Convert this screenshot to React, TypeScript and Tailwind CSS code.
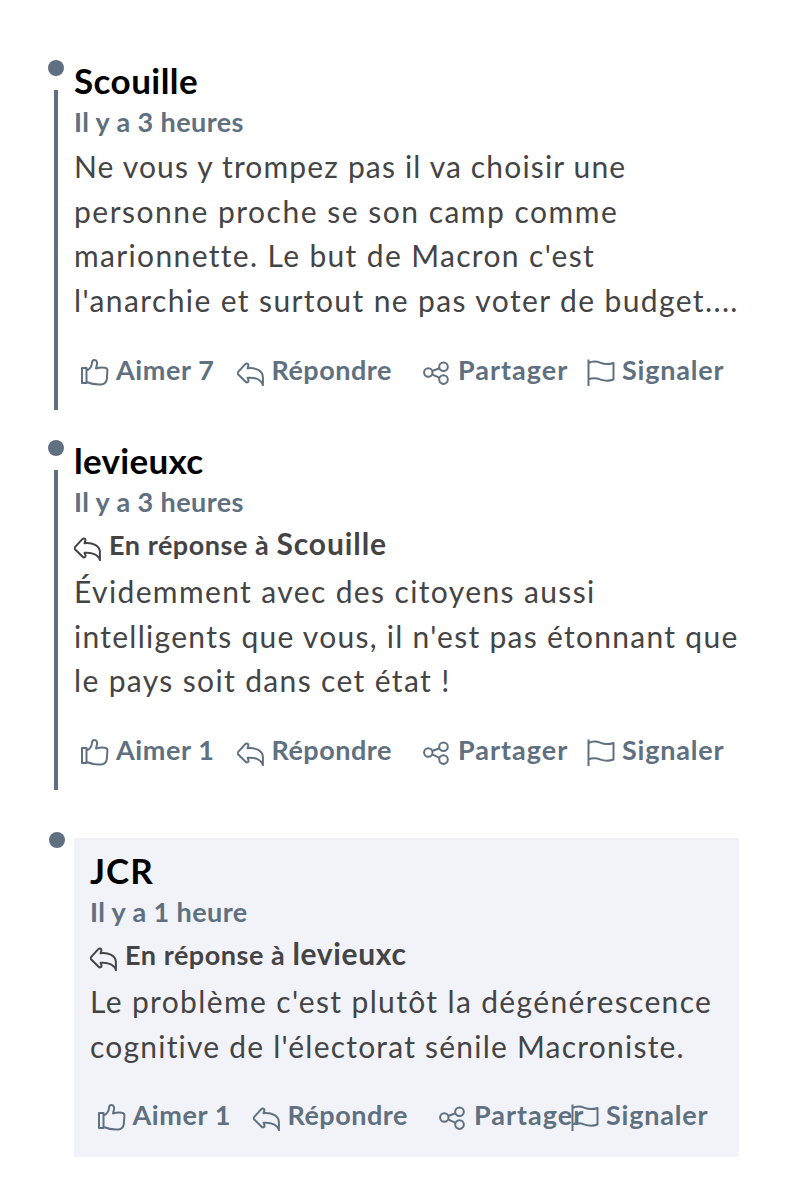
import type { ReactNode } from "react";
import clsx from "clsx";

type Line = {
  text: string;
  tracking: string;
};

type Comment = {
  author: string;
  authorTracking: string;
  time: string;
  replyTo?: string;
  replyTracking?: string;
  lines: Line[];
  likes: number;
  nested?: boolean;
};

const comments: Comment[] = [
  {
    author: "Scouille",
    authorTracking: "tracking-[0.45px]",
    time: "Il y a 3 heures",
    lines: [
      { text: "Ne vous y trompez pas il va choisir une", tracking: "tracking-[1.16px]" },
      { text: "personne proche se son camp comme", tracking: "tracking-[1.5px]" },
      { text: "marionnette. Le but de Macron c'est", tracking: "tracking-[1.35px]" },
      { text: "l'anarchie et surtout ne pas voter de budget....", tracking: "tracking-[1.39px]" },
    ],
    likes: 7,
  },
  {
    author: "levieuxc",
    authorTracking: "tracking-[0.3px]",
    time: "Il y a 3 heures",
    replyTo: "Scouille",
    replyTracking: "tracking-[0.9px]",
    lines: [
      { text: "Évidemment avec des citoyens aussi", tracking: "tracking-[1.38px]" },
      { text: "intelligents que vous, il n'est pas étonnant que", tracking: "tracking-[1.28px]" },
      { text: "le pays soit dans cet état !", tracking: "tracking-[1.36px]" },
    ],
    likes: 1,
  },
  {
    author: "JCR",
    authorTracking: "tracking-[1px]",
    time: "Il y a 1 heure",
    replyTo: "levieuxc",
    replyTracking: "tracking-[0.65px]",
    lines: [
      { text: "Le problème c'est plutôt la dégénérescence", tracking: "tracking-[1.36px]" },
      { text: "cognitive de l'électorat sénile Macroniste.", tracking: "tracking-[1.22px]" },
    ],
    likes: 1,
    nested: true,
  },
];

function Icon({ children }: { children: ReactNode }) {
  return (
    <svg
      viewBox="0 0 28 28"
      className="h-7 w-7 shrink-0"
      fill="none"
      stroke="currentColor"
      strokeWidth="2"
      strokeLinejoin="round"
      aria-hidden="true"
    >
      {children}
    </svg>
  );
}

function LikeIcon() {
  return (
    <Icon>
      <path d="M1 10h4.5v15H1zM5.500 12.500c3-1.200 5.200-4 5.500-7.500.1-2 .8-3 2.300-3 2.500 0 3.400 2.600 2.400 5.500L15 10.500c2.800-1 6.500-1.300 9-.8 1.700.3 2.500 1.300 2.400 3l-.6 8.500c-.4 3-2.200 4.900-5.300 5.200-5 .5-10-.4-15-2.400" />
    </Icon>
  );
}

function ReplyIcon() {
  return (
    <Icon>
      <path d="M8.300 6.200c1.500-1.600 3.600-.4 3 1.500l-.8 2.500c8.500-.8 15 2.500 15.400 8.500v8.500c-1.400-5-7-8-15.300-7.400l.8 2.200c.6 2-1.300 3.300-2.800 1.800L1 16.200c-.6-.6-.6-1.400 0-2z" />
    </Icon>
  );
}

function ShareIcon() {
  return (
    <Icon>
      <circle cx="5.300" cy="14.500" r="4.200" />
      <circle cx="20.500" cy="8.700" r="4.300" />
      <circle cx="20.500" cy="21.600" r="4.300" />
      <path d="m9.200 13 7.300-2.800M9 16.400l7.700 3.400" />
    </Icon>
  );
}

function FlagIcon() {
  return (
    <Icon>
      <path d="M1.500 1.500V28M1.500 5c4.500-2.200 8-1.800 12.200-.1 4 1.600 8 1.700 12.800.1v16.500c-4.800 1.700-8.800 1.500-12.800.1-4.200-1.600-7.700-1.900-12.200-.3" />
    </Icon>
  );
}

function Action({
  icon,
  label,
  className,
}: {
  icon: ReactNode;
  label: string;
  className: string;
}) {
  return (
    <button className={clsx("flex shrink-0 gap-[7px] text-left", className)}>
      <span className="mt-1.5">{icon}</span>
      <span className="whitespace-nowrap">{label}</span>
    </button>
  );
}

function CommentCard({ comment }: { comment: Comment }) {
  const { nested } = comment;
  return (
    <div className={clsx(nested && "h-[319px] w-[665px] bg-[#f2f3f8] pl-4 pt-[11px]")}>
      <h3 className={clsx("text-[35px] font-bold leading-[42px] text-black", comment.authorTracking)}>
        {comment.author}
      </h3>
      <p className="pt-px text-[27px] font-bold leading-10 tracking-[0.4px] text-[#5f7080]">
        {comment.time}
      </p>
      {comment.replyTo && (
        <div className="flex h-[45px] gap-[7px] font-bold leading-[43px] text-[#444446]">
          <span className="mt-[11px]">
            <ReplyIcon />
          </span>
          <p className="whitespace-nowrap text-[27px] tracking-[0.55px]">
            En réponse à{" "}
            <span className={clsx("text-[30px]", comment.replyTracking)}>{comment.replyTo}</span>
          </p>
        </div>
      )}
      <div className="mt-0.5 text-[30px] leading-[44.7px] text-[#444446]">
        {comment.lines.map((line) => (
          <p key={line.text} className={clsx("whitespace-nowrap", line.tracking)}>
            {line.text}
          </p>
        ))}
      </div>
      <div
        className={clsx(
          "mt-[29px] flex text-[27px] font-bold leading-9 text-[#5f7080]",
          nested ? "pl-[7.5px]" : "pl-[7px]",
        )}
      >
        <Action
          icon={<LikeIcon />}
          label={`Aimer ${comment.likes}`}
          className={clsx("tracking-[0.6px]", nested ? "w-[155px]" : "w-[155.5px]")}
        />
        <Action icon={<ReplyIcon />} label="Répondre" className="w-[186.5px] tracking-[0.5px]" />
        <Action
          icon={<ShareIcon />}
          label="Partager"
          className={clsx("tracking-[1px]", nested ? "w-[132px]" : "w-[164px]")}
        />
        <Action icon={<FlagIcon />} label="Signaler" className="w-[138px] tracking-[0.8px]" />
      </div>
    </div>
  );
}

export default function App() {
  return (
    <main className="flex h-[1200px] w-[785px] flex-col overflow-hidden bg-white pl-12 pt-[59px] font-['Lato',sans-serif]">
      {comments.map((comment) => (
        <article
          key={comment.author}
          className={clsx("flex gap-[10px]", comment.nested ? "h-[325px] pt-[19px]" : "h-[380px]")}
        >
          <div className={clsx("flex w-4 shrink-0 flex-col items-center", comment.nested && "-mt-[7px] ml-[1px] -mr-[1px]")}>
            <span className="mt-[1px] h-4 w-4 rounded-full bg-[#5f7080]" />
            {!comment.nested && <span className="mt-[14px] h-80 w-1 bg-[#5f7080]" />}
          </div>
          <CommentCard comment={comment} />
        </article>
      ))}
    </main>
  );
}
